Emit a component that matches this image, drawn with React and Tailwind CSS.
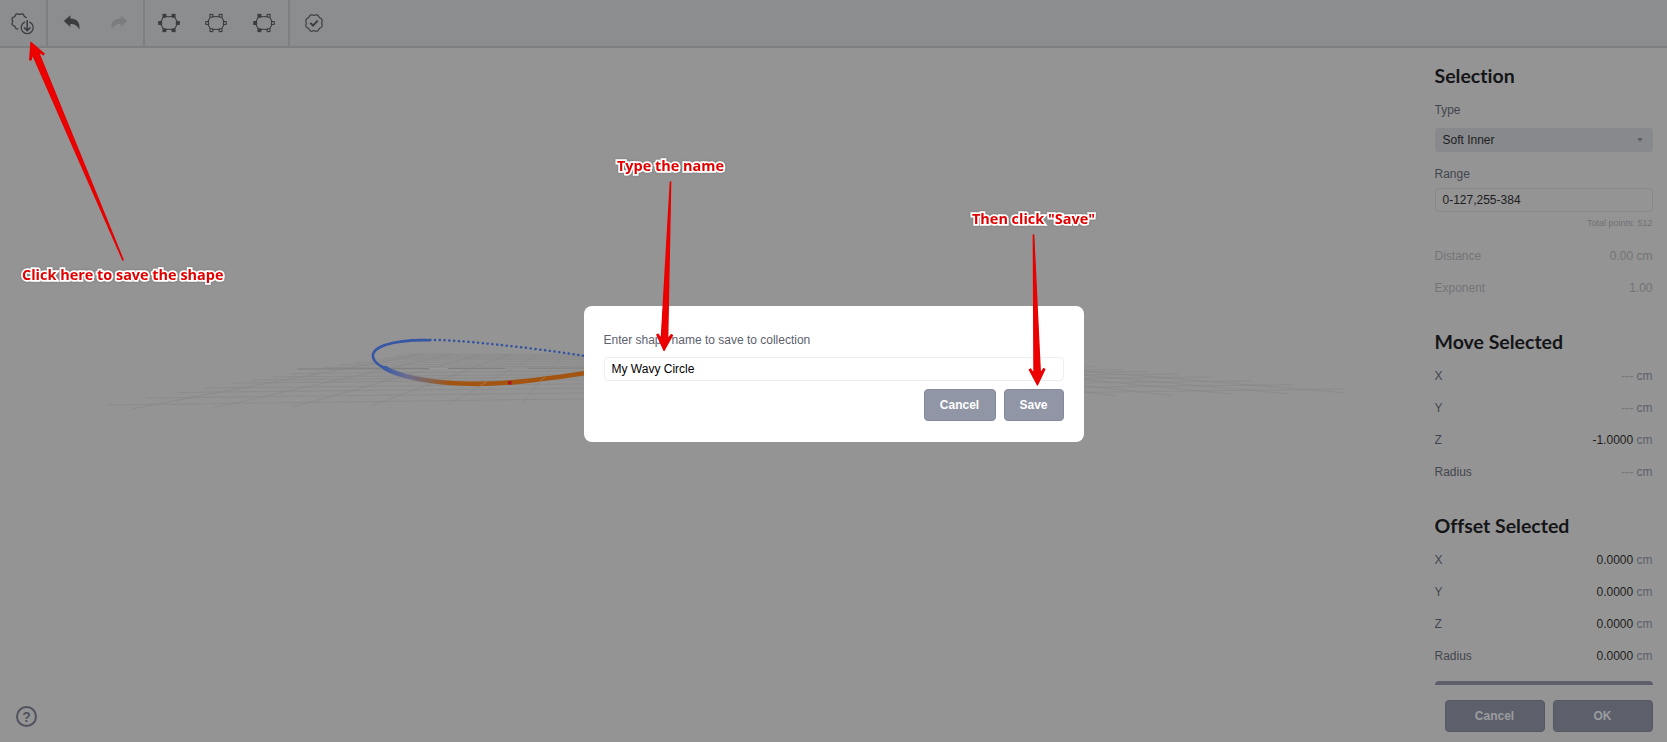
import React, { useState } from 'react';
import { clsx } from 'clsx';

const INK = '#3c3d41';

// Ring outline with eight soft lobes; start and end are in degrees
const wavyArc = (cx, cy, r, amp, start = 0, end = 360) => {
  const pts = [];
  for (let deg = start; deg <= end; deg += 3) {
    const a = (deg / 180) * Math.PI;
    const rr = r - amp * Math.cos(a * 8);
    pts.push(`${(cx + rr * Math.cos(a)).toFixed(2)} ${(cy + rr * Math.sin(a)).toFixed(2)}`);
  }
  return `M${pts.join('L')}`;
};

const SaveShapeIcon = () => (
  <svg width="24" height="24" viewBox="0 0 24 24" fill="none" stroke={INK} strokeWidth="1.3" strokeLinecap="round">
    <path d={wavyArc(8.6, 10.4, 7.5, 0.55, 102, 330)} />
    <path d="M13.700 11.200 A6 6 0 1 0 18.700 11.200" />
    <path d="M16.200 9.700 V19.600 M13.400 16.900 L16.200 19.700 L19 16.900" strokeWidth="1.600" />
  </svg>
);

const UndoIcon = ({ flip }) => (
  <svg width="18" height="18" viewBox="0 0 18 18" className={clsx(flip && '-scale-x-100')}>
    <path
      d="M0.800 7 L7.300 1.300 V4.500 C13.500 4.500 17.600 8.300 16.300 15.800 C14.800 11.800 12 9.900 7.300 9.900 V12.900 Z"
      fill={flip ? '#7b7c7e' : INK}
    />
  </svg>
);

const NODES = [[6.4, 3.800], [15.600, 3.800], [2.200, 11], [19.800, 11], [6.4, 18.200], [15.600, 18.200]];

const NodesIcon = ({ filled }) => (
  <svg width="22" height="22" viewBox="0 0 22 22" fill="none" stroke={INK} strokeWidth="1.1">
    <path d="M6.400 3.800 Q11 5.600 15.600 3.800 Q17.900 7 19.800 11 Q17.900 15 15.600 18.200 Q11 16.400 6.400 18.200 Q4.100 15 2.200 11 Q4.100 7 6.400 3.800Z" />
    {NODES.map(([x, y]) => (
      <rect key={`${x}-${y}`} x={x - 1.4} y={y - 1.4} width="2.800" height="2.800" fill={filled(x) ? INK : '#8c8d8f'} />
    ))}
  </svg>
);

const ValidateIcon = () => (
  <svg width="20" height="20" viewBox="0 0 20 20" fill="none" stroke={INK}>
    <path d={wavyArc(10, 10, 8.2, 0.5)} strokeWidth="1.200" />
    <path d="M6.300 9.900 L9 12.600 L13.700 7.600" strokeWidth="2" />
  </svg>
);

const ToolButton = ({ children, className }) => (
  <button className={clsx('flex h-full items-center justify-center pb-px', className)}>{children}</button>
);

const Toolbar = () => (
  <header className="flex h-12 shrink-0 items-stretch border-b-2 border-[#7e7f81] bg-[#8c8d8f]">
    <div className="flex w-12 border-r-2 border-[#7e7f81]">
      <ToolButton className="w-[45px]"><SaveShapeIcon /></ToolButton>
    </div>
    <div className="flex w-[97px] border-r-2 border-[#7e7f81]">
      <ToolButton className="w-[47px]"><UndoIcon /></ToolButton>
      <ToolButton className="w-12"><UndoIcon flip /></ToolButton>
    </div>
    <div className="flex w-[145px] border-r-2 border-[#7e7f81]">
      <ToolButton className="w-[47px]"><NodesIcon filled={() => true} /></ToolButton>
      <ToolButton className="w-12"><NodesIcon filled={() => false} /></ToolButton>
      <ToolButton className="w-12"><NodesIcon filled={(x) => x < 11} /></ToolButton>
    </div>
    <ToolButton className="w-[47px]"><ValidateIcon /></ToolButton>
  </header>
);

// Ground plane: each line is [x1, y1, x2, y2]
const ROWS = [
  [107, 405, 1344, 389], [146, 398, 1293, 384.7], [178, 392.5, 1251, 381], [205, 388, 1212, 377],
  [231, 383, 1179, 374], [253, 380, 1148, 371.7], [273, 377, 1122, 369.7], [291, 373.5, 1095, 366.7],
  [325, 367.5, 1050, 364], [340, 365, 1025, 362], [355, 362.5, 1005, 360], [370, 360, 985, 359],
  [383, 358, 960, 358], [395, 356, 940, 357], [407, 354, 900, 356],
];

const COLUMNS = [
  [132, 408.7, 423, 354], [214, 407.7, 453, 354], [293, 407, 482, 354], [372, 405.7, 510, 354],
  [448, 404.3, 538, 354], [522, 403, 563, 355], [1055, 397, 765, 356], [1115, 395.7, 792, 356],
  [1174, 395.7, 818, 356], [1232, 394, 845, 356], [1288, 393.7, 872, 356], [1344, 392.7, 900, 356],
];

const BACK_CURVE = 'M583 355.700 C550 350.500 505 345 470 342 S420 339.800 410 340.600';
const LEFT_CURVE = 'M430 340.200 C413 339.700 397 341.200 386 344.700 C376 348 372 352 373 357 C374 362 379 366 387 369';

const Viewport = () => (
  <svg className="block" width="1400" height="694" viewBox="0 48 1400 694" fill="none">
    <g stroke="#888888" strokeWidth="0.700">
      {[...ROWS, ...COLUMNS].map(([x1, y1, x2, y2]) => (
        <line key={`${x1}-${y1}`} x1={x1} y1={y1} x2={x2} y2={y2} />
      ))}
    </g>
    <path d="M297 369 L600 368" stroke="#7e7f7c" />
    <path d="M429 368.500 H448 M505 368.200 H528" stroke="#989897" />
    <defs>
      <linearGradient id="falloff" x1="383" x2="450" y1="0" y2="0" gradientUnits="userSpaceOnUse">
        <stop offset="0" stopColor="#3859a5" />
        <stop offset="0.350" stopColor="#6a6e91" />
        <stop offset="0.700" stopColor="#87644e" />
        <stop offset="1" stopColor="#a25410" />
      </linearGradient>
    </defs>
    <path d={BACK_CURVE} stroke="#31529f" strokeWidth="2.500" strokeLinecap="round" strokeDasharray="0.100 4.700" />
    <path d={LEFT_CURVE} stroke="#3757a4" strokeWidth="2.600" strokeLinecap="round" />
    <path
      d="M384 367.500 C398 376 427 383 470 383.800 C505 384.400 535 380.500 590 372.500"
      stroke="url(#falloff)"
      strokeWidth="4.600"
    />
    <path d="M480 386 L487 381.500 M539 382 L545 377" stroke="#b17a48" />
    <rect x="508" y="381" width="3.500" height="3.500" fill="#ad1420" />
  </svg>
);

const Heading = ({ children, className }) => (
  <h2 className={clsx('font-[Lato,sans-serif] text-[19.500px] leading-6 font-bold text-[#151517] [font-variant-ligatures:none]', className)}>
    {children}
  </h2>
);

const ValueRow = ({ label, value, unit, disabled }) => (
  <div className="flex h-8 items-center justify-between">
    <span className={disabled ? 'text-[#737477]' : 'text-[#43464e]'}>{label}</span>
    <span className={clsx(disabled || value === '---' ? 'text-[#727376]' : 'text-[#1d1d20]')}>
      {value}
      {unit && <span className={disabled ? 'text-[#727376]' : 'text-[#5c5f69]'}> {unit}</span>}
    </span>
  </div>
);

const PanelButton = ({ children }) => (
  <button className="h-8 w-[100px] rounded-[4px] border border-[#555862] bg-[#5d606b] font-bold text-[#9b9ca0]">
    {children}
  </button>
);

const MOVE = [['X', '---'], ['Y', '---'], ['Z', '-1.0000'], ['Radius', '---']];
const OFFSET = [['X', '0.0000'], ['Y', '0.0000'], ['Z', '0.0000'], ['Radius', '0.0000']];

const Sidebar = () => (
  <aside className="w-[267px] shrink-0 pr-[14.500px] pl-[34.500px]">
    <div className="h-[637px] overflow-hidden pt-4">
      <Heading>Selection</Heading>
      <p className="mt-[14px] leading-4 text-[#43464e]">Type</p>
      <div className="mt-[10px] flex h-6 items-center justify-between rounded-[4px] bg-[#88898d] px-2 text-[#1d1d20]">
        <span>Soft Inner</span>
        <svg width="6" height="4" viewBox="0 0 6 4" className="mr-0.5">
          <path d="M0.300 0.200 H5.700 L3 3.800Z" fill="#565963" />
        </svg>
      </div>
      <p className="mt-[14px] leading-4 text-[#43464e]">Range</p>
      <div className="mt-[6px] flex h-6 items-center rounded-[4px] border border-[#88898c] px-[7px] text-[#1d1d20]">
        0-127,255-384
      </div>
      <p className="mt-[5px] text-right text-[9px] leading-3 text-[#717276]">Total points: 512</p>
      <div className="mt-[11px]">
        <ValueRow label="Distance" value="0.00" unit="cm" disabled />
        <ValueRow label="Exponent" value="1.00" disabled />
      </div>
      <Heading className="mt-[26px]">Move Selected</Heading>
      <div className="mt-[6px]">
        {MOVE.map(([label, value]) => <ValueRow key={label} label={label} value={value} unit="cm" />)}
      </div>
      <Heading className="mt-[26px]">Offset Selected</Heading>
      <div className="mt-[6px]">
        {OFFSET.map(([label, value]) => <ValueRow key={label} label={label} value={value} unit="cm" />)}
      </div>
      <div className="mt-[9px] h-8 rounded-[4px] bg-[#5d606b]" />
    </div>
    <div className="mt-[15px] flex justify-end gap-2">
      <PanelButton>Cancel</PanelButton>
      <PanelButton>OK</PanelButton>
    </div>
  </aside>
);

const SaveDialog = () => {
  const [name, setName] = useState('My Wavy Circle');

  return (
    <div className="fixed inset-0 flex items-center justify-center pt-[5px]">
      <div className="flex h-[136px] w-[500px] flex-col rounded-[8px] bg-white px-5 pt-[26.500px]">
        <label className="leading-4 text-[#5d616d]">Enter shape name to save to collection</label>
        <input
          value={name}
          onChange={(e) => setName(e.target.value)}
          className="mt-[9px] h-6 rounded-[4px] border border-[#ededf2] px-[7px] text-black outline-none"
        />
        <div className="mt-2 flex justify-end gap-2">
          <button className="h-8 w-[72px] rounded-[4px] border border-[#858a9b] bg-[#9196a7] font-bold text-white">Cancel</button>
          <button className="h-8 w-[60px] rounded-[4px] border border-[#858a9b] bg-[#9196a7] font-bold text-white">Save</button>
        </div>
      </div>
    </div>
  );
};

// Tapered arrow running from a thin tail to its head
const Arrow = ({ from, to }) => {
  const dx = to[0] - from[0];
  const dy = to[1] - from[1];
  const len = Math.hypot(dx, dy);
  const angle = (Math.atan2(dy, dx) * 180) / Math.PI - 90;
  return (
    <path
      transform={`translate(${to[0]} ${to[1]}) rotate(${angle})`}
      d={`M0 -1 L-7.800 -16.500 L-6.600 -17.200 L-3.200 -12.500 L-0.200 ${-len} L0.200 ${-len} L3.200 -12.500 L6.600 -17.200 L7.800 -16.500Z`}
      fill="#ee0000"
      stroke="#e60000"
      strokeWidth="1.300"
      strokeLinejoin="round"
    />
  );
};

const Note = ({ children, className }) => (
  <span
    className={clsx(
      "absolute font-['Open_Sans','Noto_Sans',sans-serif] text-[14.450px] leading-5 font-bold whitespace-nowrap text-[#e00000]",
      '[paint-order:stroke_fill] [-webkit-text-stroke:3.500px_white] [stroke-linejoin:round] drop-shadow-[0_0_1px_#777]',
      className
    )}
  >
    {children}
  </span>
);

const Annotations = () => (
  <div className="pointer-events-none fixed inset-0">
    <svg width="1667" height="742" viewBox="0 0 1667 742">
      <Arrow from={[123, 260]} to={[30.5, 41.5]} />
      <Arrow from={[670.5, 182]} to={[664, 351.5]} />
      <Arrow from={[1033.5, 235]} to={[1037.5, 386]} />
    </svg>
    <Note className="top-[265px] left-[22px]">Click here to save the shape</Note>
    <Note className="top-[156px] left-[617px]">Type the name</Note>
    <Note className="top-[209px] left-[972px]">Then click "Save"</Note>
  </div>
);

const App = () => (
  <div className="flex h-screen w-full flex-col overflow-hidden bg-[#949495] font-['Liberation_Sans',Arial,sans-serif] text-[12px]">
    <Toolbar />
    <div className="flex min-h-0 flex-1">
      <main className="relative w-[1400px] shrink-0">
        <Viewport />
        <button className="absolute bottom-[15px] left-4 flex size-[21px] items-center justify-center rounded-full border-2 border-[#50535e] text-[14px] leading-none font-bold text-[#50535e]">
          ?
        </button>
      </main>
      <Sidebar />
    </div>
    <SaveDialog />
    <Annotations />
  </div>
);

export default App;
